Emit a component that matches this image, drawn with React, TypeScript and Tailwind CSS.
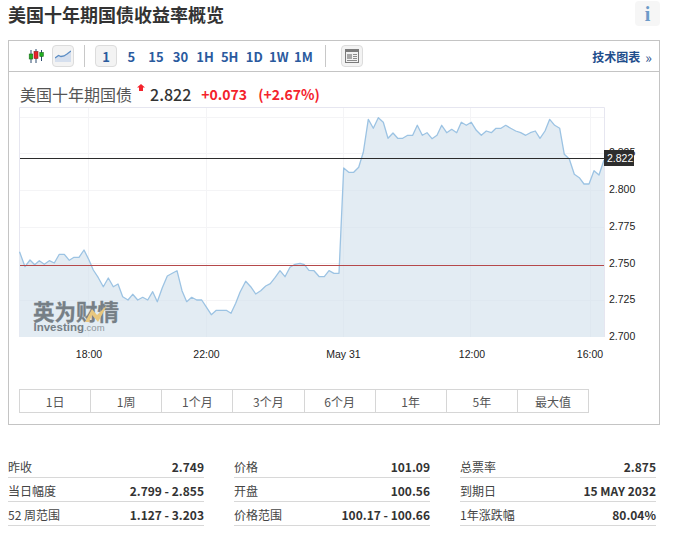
const linePoints = [
  [19.5, 251.7], [25, 266.7], [30, 260], [34.7, 264.7], [39.3, 260.7], [44.3, 264.3], [49.3, 260.7], [54.3, 263], [59.3, 254.3], [64.3, 254.3],
  [69.3, 260.3], [74, 257.3], [79, 257.3], [84, 250], [89, 260], [93.3, 270], [98.3, 277.7], [103.3, 286.7], [108.3, 278], [113.3, 286.7],
  [118, 284], [122.7, 296.7], [128, 300], [132.7, 294.3], [137.7, 300], [142.7, 297.3], [147.7, 300], [152.7, 291.7], [157.3, 301.7], [162.3, 287.7],
  [167.3, 276], [172.3, 273.3], [177, 270.7], [182, 290.7], [186.7, 301.7], [191.7, 297.3], [196.7, 300], [201.7, 300], [206.7, 307.7], [211.3, 314.7],
  [216.3, 310.3], [221.3, 310.3], [226.3, 310.3], [231, 313.3], [235.7, 303.3], [240, 292.3], [245.7, 281.3], [250.7, 286.7], [255.7, 294], [260.7, 290.7],
  [265.7, 286], [270.3, 283.7], [275, 277.7], [280, 270.7], [285, 276.7], [290, 267.3], [295, 264.3], [300, 263.3], [304.3, 264.7], [309, 270.3],
  [314, 270.7], [319.3, 276.7], [324.3, 276.7], [329, 270.7], [334, 273.3], [339, 273.3], [343.7, 168], [348.7, 172.3], [353.7, 172.3], [358.7, 167.3],
  [363.3, 152.3], [368.3, 119.3], [373.3, 128.3], [378.3, 117.7], [383.3, 122.3], [388, 138.3], [393, 133], [397.7, 138.3], [402.7, 138.3], [407.7, 135.3],
  [412.7, 135.3], [417.3, 125.3], [422.3, 135.3], [427, 132.7], [432, 138.7], [437, 135.3], [441.7, 125.3], [446.7, 132.7], [451.7, 129.3], [456.7, 132.7],
  [461.3, 122.3], [466.3, 125.3], [471.3, 122.3], [476.3, 130.3], [481.3, 135.3], [486.3, 131], [491.3, 132.7], [496, 128.3], [501, 128.3], [505.7, 125.3],
  [510.7, 128.3], [515.7, 131], [520.7, 132.7], [525.7, 135.3], [530.3, 132.7], [535.3, 131], [540, 138.3], [545, 131], [549.7, 119.3], [554.7, 125.3],
  [559.7, 128.3], [564.3, 154.3], [569.3, 159], [574.3, 174.3], [579.3, 177.7], [584, 184], [589, 184], [594, 170.7], [599, 175], [604, 160],
];
const linePath = linePoints.map((p) => p.join(',')).join(' ');
const areaPath = `${linePath} 604,337 19.5,337`;

const intervals = [
  { label: '1', active: true },
  { label: '5' },
  { label: '15' },
  { label: '30' },
  { label: '1H' },
  { label: '5H' },
  { label: '1D' },
  { label: '1W' },
  { label: '1M' },
];

const ranges = ['1日', '1周', '1个月', '3个月', '6个月', '1年', '5年', '最大值'];

const stats = [
  [['昨收', '2.749'], ['当日幅度', '2.799 - 2.855'], ['52 周范围', '1.127 - 3.203']],
  [['价格', '101.09'], ['开盘', '100.56'], ['价格范围', '100.17 - 100.66']],
  [['总票率', '2.875'], ['到期日', '15 MAY 2032'], ['1年涨跌幅', '80.04%']],
];

function CandleIcon() {
  return (
    <svg width="16" height="15" viewBox="0 0 16 15" className="block">
      <path d="M3 1v13M8 0v14M13.5 1v11" stroke="#2c4a6e" strokeWidth="1" />
      <rect x="1.2" y="5" width="3.5" height="5" fill="#20b020" stroke="#1c6b1c" strokeWidth="0.6" />
      <rect x="6" y="2.5" width="4" height="7" fill="#e8212a" stroke="#8b2020" strokeWidth="0.6" />
      <rect x="11.8" y="3.5" width="3.5" height="4" fill="#20b020" stroke="#1c6b1c" strokeWidth="0.6" />
    </svg>
  );
}

function AreaIcon() {
  return (
    <svg width="16" height="12" viewBox="0 0 16 12" className="block">
      <path d="M0 8l3.5-2.5 2.5 1 3-.5 3-2 4-3V12H0z" fill="#d5dfee" />
      <path d="M0 8l3.5-2.5 2.5 1 3-.5 3-2 4-3" fill="none" stroke="#5a8cc4" strokeWidth="1.3" />
    </svg>
  );
}

function TableIcon() {
  return (
    <svg width="14" height="14" viewBox="0 0 14 14" className="block">
      <rect x="0.5" y="0.5" width="13" height="13" fill="#f2f2f2" stroke="#7b7b7b" />
      <rect x="1" y="1" width="12" height="2" fill="#7b7b7b" />
      <rect x="2" y="5" width="5" height="5" fill="#a8a8a8" />
      <path d="M8 5.5h4M8 7.5h4M8 9.5h4M2 11.5h10" stroke="#8c8c8c" strokeWidth="1" />
    </svg>
  );
}

function PriceChart() {
  return (
    <svg width="650" height="280" viewBox="9 105 650 280" className="block font-['Liberation_Sans',sans-serif] text-[10.5px]">
      <defs>
        <clipPath id="area-clip">
          <polygon points={areaPath} />
        </clipPath>
      </defs>
      <path d="M19.5 337V107.5H604.5V337" fill="none" stroke="#e6e6f0" />
      <path d="M20 117.5H604M20 153.5H604M20 190.5H604M20 227.5H604M20 263.5H604M20 300.5H604" stroke="#f4f4f6" />
      <path d="M88.5 108V337M206.5 108V337M343.5 108V337M470.5 108V337M590.5 108V337" stroke="#f4f4f6" />
      <polygon points={areaPath} fill="#e3ecf3" />
      <path
        d="M20 117.5H604M20 153.5H604M20 190.5H604M20 227.5H604M20 263.5H604M20 300.5H604M88.5 108V337M206.5 108V337M343.5 108V337M470.5 108V337M590.5 108V337"
        stroke="#dfe8f0"
        clipPath="url(#area-clip)"
      />
      <polyline points={linePath} fill="none" stroke="#9cc3e3" strokeWidth="1.3" strokeLinejoin="round" />

      {/* watermark */}
      <g>
        <text x="33" y="320" className="font-['Noto_Sans_CJK_SC',sans-serif] text-[21.5px] font-bold" fill="#767f86" stroke="#767f86" strokeWidth="0.3">英为财情</text>
        <polygon points="85,322 92,309 97,315 107,305 103,313 98,322 92,315 89,322" fill="#e8c77e" />
        <text x="33.5" y="331" className="text-[11.5px] font-bold" fill="#767f86">Investing<tspan className="font-normal text-[9.5px]" fill="#8f979d">.com</tspan></text>
      </g>

      <line x1="20" y1="265.5" x2="604" y2="265.5" stroke="#b5484a" />
      <line x1="20" y1="158.5" x2="604" y2="158.5" stroke="#2b2b2b" />

      <text x="609" y="156" fill="#222">2.825</text>
      <text x="609" y="193" fill="#222">2.800</text>
      <text x="609" y="230" fill="#222">2.775</text>
      <text x="609" y="267" fill="#222">2.750</text>
      <text x="609" y="303" fill="#222">2.725</text>
      <text x="609" y="340" fill="#222">2.700</text>

      <rect x="604" y="150" width="30" height="16" fill="#2d2d2d" />
      <text x="607" y="162" fill="#fff">2.822</text>

      <text x="89" y="358" textAnchor="middle" fill="#222">18:00</text>
      <text x="206.5" y="358" textAnchor="middle" fill="#222">22:00</text>
      <text x="343.5" y="358" textAnchor="middle" fill="#222">May 31</text>
      <text x="472" y="358" textAnchor="middle" fill="#222">12:00</text>
      <text x="590" y="358" textAnchor="middle" fill="#222">16:00</text>
    </svg>
  );
}

export default function App() {
  return (
    <div className="h-[536px] w-[676px] overflow-hidden bg-white font-['Noto_Sans_CJK_SC',sans-serif] text-[#333]">
      <div className="flex h-[26px] items-center justify-between pl-2 pr-4 pt-px">
        <h1 className="text-lg font-bold leading-none text-[#333]">美国十年期国债收益率概览</h1>
        <div className="flex h-[25px] w-[25px] items-center justify-center rounded-sm bg-[#f6f6f6] font-['Liberation_Serif',serif] text-xl font-bold text-[#6d9bc9]">
          i
        </div>
      </div>

      <div className="ml-2 mt-3.5 h-[385px] w-[652px] border border-[#c4c4c4]">
        <div className="flex h-[31px] items-center border-b border-[#c4c4c4] pl-[19px] pr-[7px]">
          <CandleIcon />
          <div className="ml-2 flex h-[22px] w-[22px] items-center justify-center rounded-sm border border-[#dcdcdc] bg-[#f3f3f3]">
            <AreaIcon />
          </div>
          <div className="ml-[10px] h-[22px] w-px bg-[#c8c8c8]" />
          <div className="ml-2.5 flex items-center text-[13px] font-bold text-[#2a5a9e]">
            {intervals.map((item) => (
              <div
                key={item.label}
                className={
                  item.active
                    ? 'mr-0.5 flex h-[22px] w-[22px] items-center justify-center rounded-sm border border-[#dcdcdc] bg-[#f3f3f3] pt-px'
                    : 'flex h-[22px] w-[24.6px] items-center justify-center pt-px'
                }
              >
                {item.label}
              </div>
            ))}
          </div>
          <div className="ml-[9px] h-[22px] w-px bg-[#c8c8c8]" />
          <div className="ml-[15px] flex h-[22px] w-[22px] items-center justify-center rounded-sm border border-[#dcdcdc] bg-[#f3f3f3]">
            <TableIcon />
          </div>
          <a className="ml-auto flex items-center pt-px text-xs font-bold text-[#1f4e8c]">
            技术图表<span className="ml-[5px] text-sm font-normal leading-none">»</span>
          </a>
        </div>

        <div className="flex h-[33px] items-center pl-[11px] pt-[10px]">
          <span className="text-base leading-none text-[#555]">美国十年期国债</span>
          <svg width="8" height="7" viewBox="0 0 8 7" className="mb-[13px] ml-[5px] block">
            <path d="M4 0l4 3.5H6V7H2V3.5H0z" fill="#f4232c" />
          </svg>
          <span className="ml-[5px] text-base font-medium leading-none text-[#333]">2.822</span>
          <span className="ml-[10px] text-sm font-bold leading-none text-[#f4232c]">+0.073</span>
          <span className="ml-[11px] text-sm font-bold leading-none text-[#f4232c]">(+2.67%)</span>
        </div>

        <PriceChart />

        <div className="ml-2.5 mt-1 flex h-6 w-[570px] border border-[#d6d6d6] text-xs text-[#555]">
          {ranges.map((label, i) => (
            <div
              key={label}
              className={i === 0 ? 'flex flex-1 items-center justify-center pt-px' : 'flex flex-1 items-center justify-center border-l border-[#d6d6d6] pt-px'}
            >
              {label}
            </div>
          ))}
        </div>
      </div>

      <div className="ml-2 mt-[29px] grid w-[648px] grid-cols-3 gap-x-[30px]">
        {stats.map((col, c) => (
          <div key={c}>
            {col.map(([label, value]) => (
              <div key={label} className="flex h-6 items-center justify-between border-b border-[#d8d8d8] pt-[3px] text-xs">
                <span className="text-[#444]">{label}</span>
                <span className="font-bold text-[#333]">{value}</span>
              </div>
            ))}
          </div>
        ))}
      </div>
    </div>
  );
}
